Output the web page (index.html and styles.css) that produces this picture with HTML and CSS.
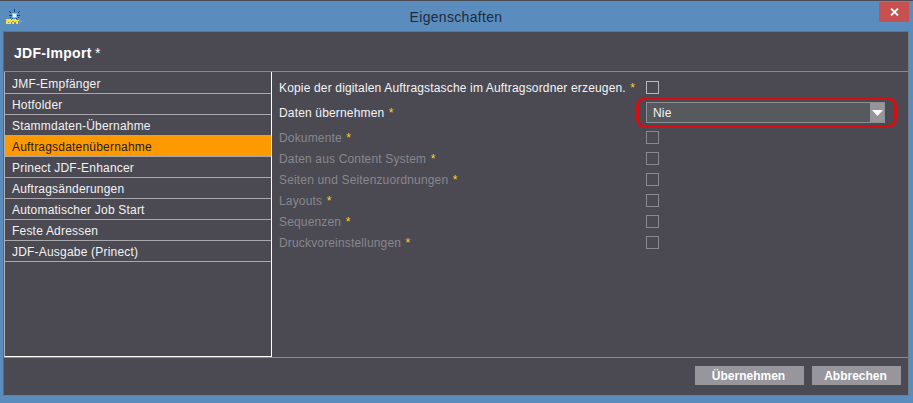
FILE: index.html
```html
<!DOCTYPE html>
<html lang="de">
<head>
<meta charset="utf-8">
<title>Eigenschaften</title>
<link rel="stylesheet" href="styles.css">
</head>
<body>
<div class="window">
  <div class="titlebar">
    <svg class="app-icon" width="16" height="16" viewBox="0 0 16 16" shape-rendering="crispEdges">
      <path fill="#1c3f86" d="M8 1h1v3H8zM3 3h1v1h1v1H4V4H3zM13 3h1v1h-1v1h-1V4h1zM3 7h3v1H3zM11 7h3v1h-3zM4 9h1v1H4zM12 9h1v1h-1zM6 10h1v1H6zM10 10h1v1h-1z"/>
      <rect x="6" y="5" width="5" height="5" fill="#7fc4ee"/>
      <rect x="7" y="6" width="3" height="3" fill="#e8fbff"/>
      <path fill="#f7e23a" d="M0 11h5v1h1v-1h4v1h3v1h-1v3h-2v-2H8v2H6v-2H5v2H0v-1h3v-1H2v1H0z"/>
      <path fill="#f08a1c" d="M13 11h1v2h2v1h-2v2h-1zM6 13h2v1H6z"/>
    </svg>
    <div class="title">Eigenschaften</div>
    <div class="close">
      <svg width="9" height="8" viewBox="0 0 9 8"><path d="M1 .5l7 7M8 .5l-7 7" stroke="#fff" stroke-width="1.8" fill="none"/></svg>
    </div>
  </div>
  <div class="panel">
    <div class="header"><span class="heading">JDF-Import</span> <span class="heading-star">*</span></div>
    <div class="main">
      <ul class="nav">
        <li class="nav-item">JMF-Empfänger</li>
        <li class="nav-item">Hotfolder</li>
        <li class="nav-item">Stammdaten-Übernahme</li>
        <li class="nav-item active">Auftragsdatenübernahme</li>
        <li class="nav-item">Prinect JDF-Enhancer</li>
        <li class="nav-item">Auftragsänderungen</li>
        <li class="nav-item">Automatischer Job Start</li>
        <li class="nav-item">Feste Adressen</li>
        <li class="nav-item">JDF-Ausgabe (Prinect)</li>
      </ul>
      <div class="form">
        <div class="row first"><span class="label">Kopie der digitalen Auftragstasche im Auftragsordner erzeugen. <i class="star">*</i></span><span class="check"></span></div>
        <div class="row select-row">
          <span class="label">Daten übernehmen <i class="star">*</i></span>
          <div class="select"><span class="select-value">Nie</span><span class="select-btn"><svg width="11" height="6" viewBox="0 0 11 6"><path d="M0 0h11L5.500 6z" fill="#fff"/></svg></span></div>
          <div class="highlight"></div>
        </div>
        <div class="row disabled"><span class="label">Dokumente <i class="star">*</i></span><span class="check"></span></div>
        <div class="row disabled"><span class="label">Daten aus Content System <i class="star">*</i></span><span class="check"></span></div>
        <div class="row disabled"><span class="label">Seiten und Seitenzuordnungen <i class="star">*</i></span><span class="check"></span></div>
        <div class="row disabled"><span class="label">Layouts <i class="star">*</i></span><span class="check"></span></div>
        <div class="row disabled"><span class="label">Sequenzen <i class="star">*</i></span><span class="check"></span></div>
        <div class="row disabled"><span class="label">Druckvoreinstellungen <i class="star">*</i></span><span class="check"></span></div>
      </div>
    </div>
    <div class="footer">
      <button class="btn apply">Übernehmen</button>
      <button class="btn cancel">Abbrechen</button>
    </div>
  </div>
</div>
</body>
</html>
```

FILE: styles.css
```css
* { box-sizing: border-box; }
html, body { margin: 0; padding: 0; }
body {
  width: 913px;
  height: 403px;
  overflow: hidden;
  background: #5a8dbd;
  font-family: "Liberation Sans", Arial, sans-serif;
  font-size: 12px;
}
.window {
  height: 403px;
  display: flex;
  flex-direction: column;
  border-top: 1px solid #4a4a52;
  padding: 0 4px 7px 3px;
}
.titlebar {
  height: 30px;
  flex: none;
  display: flex;
  align-items: flex-start;
  position: relative;
}
.app-icon { margin: 7px 0 0 3px; flex: none; }
.title {
  flex: 1;
  text-align: center;
  font-size: 14px;
  line-height: 16px;
  margin-top: 8px;
  padding-right: 19px;
  letter-spacing: 0.32px;
  color: #1f2a3a;
}
.close {
  position: absolute;
  top: 1px;
  right: 0;
  width: 30px;
  height: 20px;
  background: #c75050;
  display: flex;
  align-items: center;
  justify-content: center;
}
.panel {
  flex: 1;
  min-height: 0;
  display: flex;
  flex-direction: column;
  background: #4b4a53;
  border: 1px solid #3f6f9c;
  border-top-color: #4a7aa8;
  border-right-color: #6f7f90;
  border-bottom-color: #7a7a80;
}
.header {
  height: 39px;
  flex: none;
  padding: 13px 0 0 10px;
  line-height: 16px;
  color: #fff;
}
.heading {
  font-size: 14px;
  font-weight: bold;
  letter-spacing: 0.3px;
}
.heading-star { font-size: 14px; }
.main {
  flex: 1;
  min-height: 0;
  display: flex;
  border-top: 1px solid #8a8a8e;
  border-bottom: 1px solid #8a8a8e;
}
.nav {
  list-style: none;
  margin: 0;
  padding: 1px 0 0;
  width: 268px;
  flex: none;
  border-right: 1px solid #fff;
  border-bottom: 1px solid #fff;
  border-left: 1px solid #b0b0b4;
}
.nav-item {
  height: 21px;
  padding: 2px 0 0 7px;
  line-height: 18px;
  color: #f2f2f2;
  letter-spacing: 0.2px;
  border-bottom: 1px solid #a8a8ac;
}
.nav-item.active {
  background: #ff9900;
  color: #1c1c20;
}
.form {
  flex: 1;
  padding: 5px 0 0 7px;
}
.row {
  height: 21px;
  display: flex;
  align-items: center;
  position: relative;
  color: #f4f4f4;
  letter-spacing: 0.16px;
}
.select-row { height: 29px; }
.label { width: 367px; flex: none; white-space: nowrap; }
.star {
  font-style: normal;
  color: #ffd21f;
  margin-left: 1px;
}
.row.disabled { color: #87878c; }
.check {
  width: 13px;
  height: 13px;
  border: 1px solid #b8b8bc;
  flex: none;
}
.row.disabled .check { border-color: #8a8a8e; }
.select {
  width: 239px;
  height: 21px;
  flex: none;
  display: flex;
  align-items: stretch;
  background: #565a5e;
  border: 1px solid #909094;
}
.select-value {
  flex: 1;
  line-height: 21px;
  padding-left: 6px;
}
.select-btn {
  width: 14px;
  background: #96969a;
  display: flex;
  align-items: center;
  justify-content: center;
  padding-top: 1px;
}
.highlight {
  position: absolute;
  left: 357px;
  top: -1px;
  width: 261px;
  height: 31px;
  border: 3px solid #d40f14;
  border-radius: 9px;
}
.footer {
  height: 37px;
  flex: none;
  display: flex;
  justify-content: flex-end;
  gap: 8px;
  padding: 8px 7px 0 0;
}
.btn {
  height: 19px;
  border: 0;
  padding: 0 2px 0 0;
  background: #96969c;
  color: #fff;
  font-family: inherit;
  font-size: 12px;
  font-weight: bold;
  letter-spacing: 0;
}
.apply { width: 109px; }
.cancel { width: 89px; }
```
